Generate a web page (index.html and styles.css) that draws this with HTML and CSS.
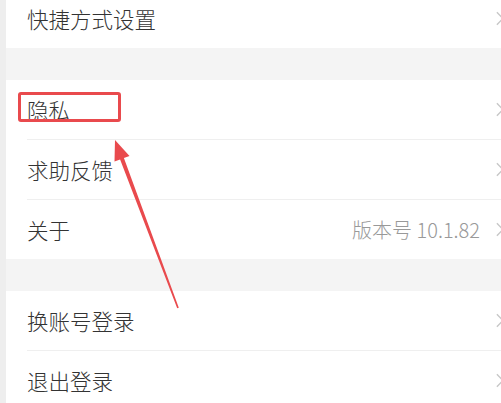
FILE: index.html
```html
<!DOCTYPE html>
<html>

<head>
    <meta name="viewport" content="width=device-width, initial-scale=1">
    <title>设置</title>
    <link rel="stylesheet" href="styles.css">
</head>

<body>
    <div class="screen">
        <div class="side"></div>

        <div class="settings">
            <div class="group group-first">
                <div class="row">
                    <span class="label">快捷方式设置</span>
                    <svg class="chev" viewBox="0 0 9 16"><polyline points="1,1 8,8 1,15" /></svg>
                </div>
            </div>

            <div class="gap"></div>

            <div class="group">
                <div class="row">
                    <span class="label">隐私</span>
                    <svg class="chev" viewBox="0 0 9 16"><polyline points="1,1 8,8 1,15" /></svg>
                </div>
                <div class="row">
                    <span class="label">求助反馈</span>
                    <svg class="chev" viewBox="0 0 9 16"><polyline points="1,1 8,8 1,15" /></svg>
                </div>
                <div class="row">
                    <span class="label">关于</span>
                    <span class="value">版本号 10.1.82</span>
                    <svg class="chev" viewBox="0 0 9 16"><polyline points="1,1 8,8 1,15" /></svg>
                </div>
            </div>

            <div class="gap"></div>

            <div class="group">
                <div class="row">
                    <span class="label">换账号登录</span>
                    <svg class="chev" viewBox="0 0 9 16"><polyline points="1,1 8,8 1,15" /></svg>
                </div>
                <div class="row">
                    <span class="label">退出登录</span>
                    <svg class="chev" viewBox="0 0 9 16"><polyline points="1,1 8,8 1,15" /></svg>
                </div>
            </div>
        </div>

        <!-- annotation drawn over the screenshot -->
        <div class="mark"></div>
        <svg class="pointer" viewBox="0 0 501 403">
            <polygon points="115,140 129.5,155.9 123.9,158 178.8,307.8 177.2,308.2 120.1,159.4 114.5,161.5" />
        </svg>
    </div>
</body>

</html>
```

FILE: styles.css
```css
html,
body {
    margin: 0;
    padding: 0;
    overflow: hidden;
}

body {
    font-family: "Noto Sans CJK SC", "Noto Sans", sans-serif;
    font-weight: 300;
    background-color: #efefef;
    color: #333;
}

.screen {
    position: relative;
    display: flex;
    width: 520px;
    height: 403px;
}

.side {
    width: 6px;
    flex-shrink: 0;
    background-color: #eeeeee;
}

.settings {
    width: 510px;
    margin-top: -11px;
    background-color: #f4f4f4;
}

.group {
    background-color: #fff;
}

.gap {
    height: 32px;
}

.row {
    display: flex;
    align-items: center;
    height: 59px;
    margin-left: 21px;
    padding-right: 12px;
    border-bottom: 1px solid #efefef;
}

.row:last-child {
    border-bottom: none;
}

.label {
    flex: 1;
    font-size: 21.5px;
    line-height: 1;
}

.value {
    font-size: 20px;
    color: #999;
    margin-right: 16px;
}

.chev {
    width: 8px;
    height: 15px;
    fill: none;
    stroke: #c8c8c8;
    stroke-width: 1.6;
}

.mark {
    position: absolute;
    left: 18px;
    top: 92px;
    width: 103px;
    height: 30px;
    box-sizing: border-box;
    border: 3px solid #e94a4d;
    border-radius: 3px;
}

.pointer {
    position: absolute;
    left: 0;
    top: 0;
    width: 501px;
    height: 403px;
    fill: #e94a4d;
}
```
